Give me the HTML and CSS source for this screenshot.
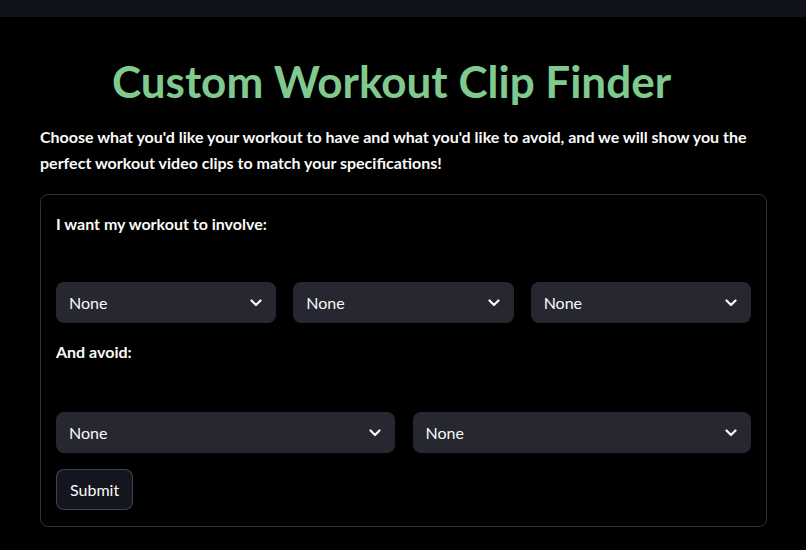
FILE: index.html
```html
<!DOCTYPE html>
<html>
<head>
<meta charset="utf-8">
<link rel="stylesheet" href="styles.css">
</head>
<body>
<header class="topbar"></header>
<main class="main">
  <h1 class="title">Custom Workout Clip Finder</h1>
  <p class="intro">Choose what you'd like your workout to have and what you'd like to avoid, and we will show you the perfect workout video clips to match your specifications!</p>
  <form class="form">
    <div class="label">I want my workout to involve:</div>
    <div class="row row-3">
      <div class="select"><span>None</span><svg class="chev" viewBox="0 0 12 8"><path d="M1.5 1.5 6 6 10.5 1.5"/></svg></div>
      <div class="select"><span>None</span><svg class="chev" viewBox="0 0 12 8"><path d="M1.5 1.5 6 6 10.5 1.5"/></svg></div>
      <div class="select"><span>None</span><svg class="chev" viewBox="0 0 12 8"><path d="M1.5 1.5 6 6 10.5 1.5"/></svg></div>
    </div>
    <div class="label label-2">And avoid:</div>
    <div class="row row-2">
      <div class="select"><span>None</span><svg class="chev" viewBox="0 0 12 8"><path d="M1.5 1.5 6 6 10.5 1.5"/></svg></div>
      <div class="select"><span>None</span><svg class="chev" viewBox="0 0 12 8"><path d="M1.5 1.5 6 6 10.5 1.5"/></svg></div>
    </div>
    <button type="button" class="submit">Submit</button>
  </form>
</main>
</body>
</html>
```
FILE: styles.css
```css
* { box-sizing: border-box; }
html, body { margin: 0; padding: 0; background: #000; }
body {
  font-family: Lato, "Noto Sans", sans-serif;
  color: #fafafa;
  width: 806px;
  height: 550px;
  overflow: hidden;
}
.topbar {
  height: 17px;
  background: #0f121a;
}
.main {
  padding: 0 39px 0 40px;
}
.title {
  margin: 0;
  padding-top: 34px;
  padding-right: 24px;
  height: 107px;
  text-align: center;
  font-size: 44px;
  font-weight: 700;
  color: #80ca8f;
  line-height: 60px;
}
.intro {
  margin: 0;
  font-size: 16px;
  font-weight: 700;
  line-height: 26px;
}
.form {
  margin-top: 18px;
  border: 1px solid rgba(250,250,250,0.2);
  border-radius: 8px;
  padding: 16px 15px 16px 15px;
}
.label {
  font-size: 16px;
  font-weight: 700;
  line-height: 26px;
  height: 71px;
}
.label-2 { height: 73px; }
.row {
  display: grid;
  gap: 17px;
  margin-bottom: 16px;
}
.row-3 { grid-template-columns: 1fr 1fr 1fr; }
.row-2 { grid-template-columns: 1fr 1fr; gap: 18px; }
.select {
  height: 41px;
  background: #262730;
  border-radius: 8px;
  display: flex;
  align-items: center;
  justify-content: space-between;
  padding: 0 14px 0 13px;
  font-size: 16px;
}
.chev {
  width: 12px;
  height: 8px;
  fill: none;
  stroke: #fafafa;
  stroke-width: 2.2;
  stroke-linecap: round;
  stroke-linejoin: round;
}
.submit {
  display: block;
  height: 41px;
  padding: 0 13px;
  background: #13161e;
  color: #fafafa;
  border: 1px solid rgba(250,250,250,0.2);
  border-radius: 8px;
  font-family: inherit;
  font-size: 16px;
  margin-top: 2px;
}
```
